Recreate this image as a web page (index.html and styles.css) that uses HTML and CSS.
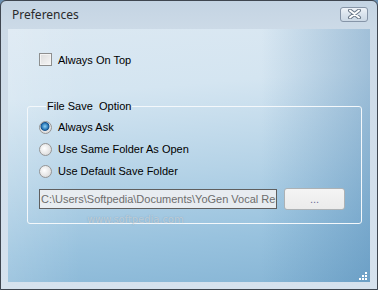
FILE: index.html
```html
<!DOCTYPE html>
<html lang="en">
<head>
    <meta charset="UTF-8">
    <title>Preferences</title>
    <link rel="stylesheet" href="styles.css">
</head>
<body>
    <div class="window">
        <div class="titlebar">
            <span class="title">Preferences</span>
            <button class="close-btn" title="Close">
                <svg width="17" height="10" viewBox="0 0 17 10">
                    <path d="M4 1.5 L13 8.5 M13 1.5 L4 8.5" stroke="#6c7a8a" stroke-width="4" stroke-linecap="round"/>
                    <path d="M4 1.5 L13 8.5 M13 1.5 L4 8.5" stroke="#ffffff" stroke-width="2" stroke-linecap="round"/>
                </svg>
            </button>
        </div>

        <div class="client">
            <label class="check-row">
                <span class="checkbox"></span>
                <span>Always On Top</span>
            </label>

            <fieldset class="group">
                <legend>File Save&nbsp; Option</legend>
                <div class="radio-row"><span class="radio checked"></span>Always Ask</div>
                <div class="radio-row"><span class="radio"></span>Use Same Folder As Open</div>
                <div class="radio-row"><span class="radio"></span>Use Default Save Folder</div>
                <div class="path-row">
                    <div class="path-box">C:\Users\Softpedia\Documents\YoGen Vocal Remover</div>
                    <button class="browse-btn">...</button>
                </div>
            </fieldset>

            <!-- watermark of the screenshot site -->
            <div class="watermark">www.softpedia.com</div>

            <svg class="grip" width="9" height="9" viewBox="0 0 9 9">
                <g fill="#ffffff">
                    <rect x="6" y="0" width="2" height="2"/>
                    <rect x="3" y="3" width="2" height="2"/>
                    <rect x="6" y="3" width="2" height="2"/>
                    <rect x="0" y="6" width="2" height="2"/>
                    <rect x="3" y="6" width="2" height="2"/>
                    <rect x="6" y="6" width="2" height="2"/>
                </g>
            </svg>
        </div>
    </div>
</body>
</html>
```

FILE: styles.css
```css
body {
    margin: 0;
    font-family: 'Liberation Sans', Arial, sans-serif;
    font-size: 11px;
    color: #000;
    background: #6b8fb0;
}
.window {
    width: 376px;
    height: 288px;
    border: 1px solid #3f4650;
    border-radius: 6px 6px 0 0;
    background: linear-gradient(180deg, #c4d4e3 0px, #ccdae7 28px, #d6e2ee 100%);
    display: flex;
    flex-direction: column;
    overflow: hidden;
}
.titlebar {
    height: 28px;
    display: flex;
    align-items: center;
    justify-content: space-between;
    padding: 0 9px 0 11px;
}
.title {
    font-family: 'Noto Sans', 'Open Sans', sans-serif;
    font-size: 12px;
    color: #2a2a2a;
    margin-top: -1px;
}
.close-btn {
    width: 28px;
    height: 15px;
    margin-top: -2px;
    padding: 0;
    border: 1px solid #8695a8;
    border-radius: 3px;
    background: linear-gradient(180deg, #eef3f8 0%, #d9e3ed 50%, #cbd8e5 100%);
    display: flex;
    align-items: center;
    justify-content: center;
}
.client {
    flex: 1;
    margin: 0 7px 7px 7px;
    position: relative;
    padding: 24px 0 0 31px;
    background:
        linear-gradient(90deg, rgba(255, 255, 255, 0.15) 0%, rgba(255, 255, 255, 0) 20%, rgba(60, 120, 170, 0) 70%, rgba(60, 120, 170, 0.35) 100%),
        linear-gradient(175deg, #dbe8f2 0%, #d4e5f1 25%, #b5d3e7 55%, #98c2de 80%, #86b5d5 100%);
}
.check-row {
    display: flex;
    align-items: center;
    height: 13px;
    gap: 6px;
}
.checkbox {
    width: 11px;
    height: 11px;
    border: 1px solid #8e8f8f;
    background: linear-gradient(135deg, #dcdcdc 0%, #f6f6f6 100%);
    box-shadow: inset 0 0 0 1px #f4f4f4;
}
.group {
    margin: 34px 0 0 -12px;
    width: 322px;
    padding: 3px 0 13px 11px;
    border: 1px solid #f4f8fb;
    border-radius: 3px;
}
.group legend {
    margin-left: 7px;
    padding: 0 1px;
    line-height: 13px;
}
.radio-row {
    display: flex;
    align-items: center;
    height: 22px;
    gap: 6px;
}
.radio {
    width: 11px;
    height: 11px;
    border: 1px solid #959595;
    border-radius: 50%;
    background: radial-gradient(circle at 40% 40%, #ffffff 0%, #e4e4e4 60%, #cfcfcf 100%);
}
.radio.checked {
    background: radial-gradient(circle at 45% 40%, #8fd2f5 0%, #2a78b8 35%, #15508a 45%, #e6e6e6 55%, #cfcfcf 100%);
}
.path-row {
    display: flex;
    align-items: center;
    gap: 7px;
    margin-top: 6px;
}
.path-box {
    width: 234px;
    height: 18px;
    line-height: 18px;
    padding: 0 1px;
    border: 1px solid #5f5f5f;
    background: rgba(238, 240, 242, 0.9);
    color: #6d6d6d;
    white-space: nowrap;
    overflow: hidden;
}
.browse-btn {
    width: 61px;
    height: 22px;
    padding: 0;
    border: 1px solid #adb2b5;
    border-radius: 3px;
    background: linear-gradient(180deg, #f4f4f4 0%, #ebebeb 100%);
    font-family: inherit;
    font-size: 11px;
    color: #6d6d96;
}
.watermark {
    position: absolute;
    left: 79px;
    top: 184px;
    font-family: 'DejaVu Sans Condensed', 'DejaVu Sans', sans-serif;
    font-size: 11px;
    color: rgba(255, 255, 255, 0.45);
    text-shadow: 0 0 1px rgba(90, 110, 130, 0.5);
}
.grip {
    position: absolute;
    right: 2px;
    bottom: 1px;
}
```
